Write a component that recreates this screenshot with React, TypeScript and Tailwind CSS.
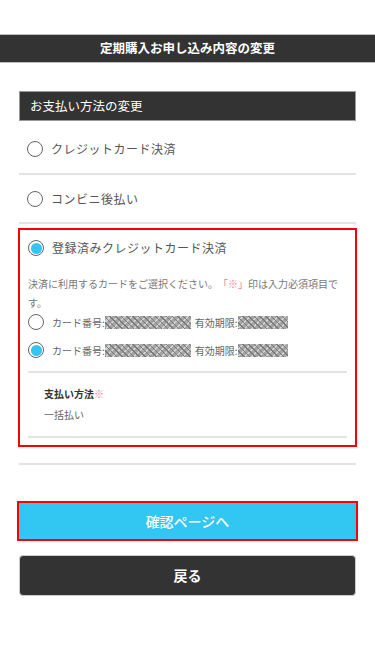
import type { ReactNode } from "react";

function Radio({ checked }: { checked?: boolean }) {
  return (
    <span className="flex h-4 w-4 shrink-0 items-center justify-center rounded-full border-[1.5px] border-[#666] bg-white">
      {checked ? <span className="h-[11px] w-[11px] rounded-full bg-[#33c6f2]" /> : null}
    </span>
  );
}

function Mask({ className }: { className: string }) {
  return (
    <span
      className={`inline-block h-[13px] bg-[#a6a6a6] bg-[repeating-linear-gradient(45deg,#7a7a7a_0px,#7a7a7a_1px,transparent_1px,transparent_4px),repeating-linear-gradient(-45deg,#d4d4d4_0px,#d4d4d4_1.5px,transparent_1.5px,transparent_5px)] ${className}`}
    />
  );
}

function OptionRow({ children, className = "" }: { children: ReactNode; className?: string }) {
  return (
    <label className={`flex items-center gap-2 border-b-2 border-[#e4e4e4] pl-2 text-[12px] tracking-[0.5px] text-[#555] ${className}`}>
      <Radio />
      <span>{children}</span>
    </label>
  );
}

function CardRow({ checked }: { checked?: boolean }) {
  return (
    <label className="flex h-5 items-center gap-2 text-[10px] text-[#666]">
      <Radio checked={checked} />
      <span className="flex items-center">
        カード番号:
        <Mask className="w-[86px]" />
        <span className="ml-[4px]">有効期限:</span>
        <Mask className="w-[50px]" />
      </span>
    </label>
  );
}

export default function App() {
  return (
    <div className="min-h-[667px] bg-white pt-[34px] font-['Noto_Sans_CJK_JP','Noto_Sans',sans-serif] [text-spacing-trim:space-all]">
      <h1 className="flex h-[29px] items-center justify-center border-y border-[#bdbdbd] bg-[#333] text-[12.5px] font-bold text-white">
        定期購入お申し込み内容の変更
      </h1>

      <div className="px-[19px] pt-[28px]">
        <h2 className="flex h-[30px] items-center border border-[#9a9a9a] bg-[#333] pl-[10px] text-[12.5px] text-white">
          お支払い方法の変更
        </h2>

        <OptionRow className="mt-1 h-[50px]">クレジットカード決済</OptionRow>
        <OptionRow className="h-[49px]">コンビニ後払い</OptionRow>

        <div className="-mx-px mt-1 border-2 border-[#ff0000] px-2 pb-[7px]">
          <label className="mt-2 flex h-5 items-center gap-2 text-[12px] tracking-[0.5px] text-[#555]">
            <Radio checked />
            <span>登録済みクレジットカード決済</span>
          </label>

          <p className="mt-4 text-[10px] leading-[19px] text-[#777]">
            決済に利用するカードをご選択ください。
            <span className="text-[#e77c8c]">「※」</span>
            印は入力必須項目です。
          </p>

          <CardRow />
          <div className="mt-2">
            <CardRow checked />
          </div>

          <div className="mt-[11px] border-t-2 border-[#e4e4e4] pl-4">
            <p className="mt-[13px] text-[10px] font-bold leading-4 text-[#333]">
              支払い方法<span className="text-[#e77c8c]">※</span>
            </p>
            <p className="mt-[5px] text-[10px] leading-4 text-[#666]">一括払い</p>
          </div>
          <div className="mt-[13px] border-t-2 border-[#e4e4e4]" />
        </div>

        <div className="mt-4 border-t-2 border-[#e4e4e4]" />

        <button
          type="button"
          className="-mx-[2px] mt-[36px] flex h-[40px] w-[calc(100%+4px)] items-center justify-center border-2 border-[#ff0000] bg-[#31c7f2] text-[14px] font-medium text-white"
        >
          確認ページへ
        </button>

        <button
          type="button"
          className="mt-[14px] flex h-[41px] w-full items-center justify-center rounded-[4px] border border-[#ccc] bg-[#333] text-[14px] font-bold text-white"
        >
          戻る
        </button>
      </div>
    </div>
  );
}
